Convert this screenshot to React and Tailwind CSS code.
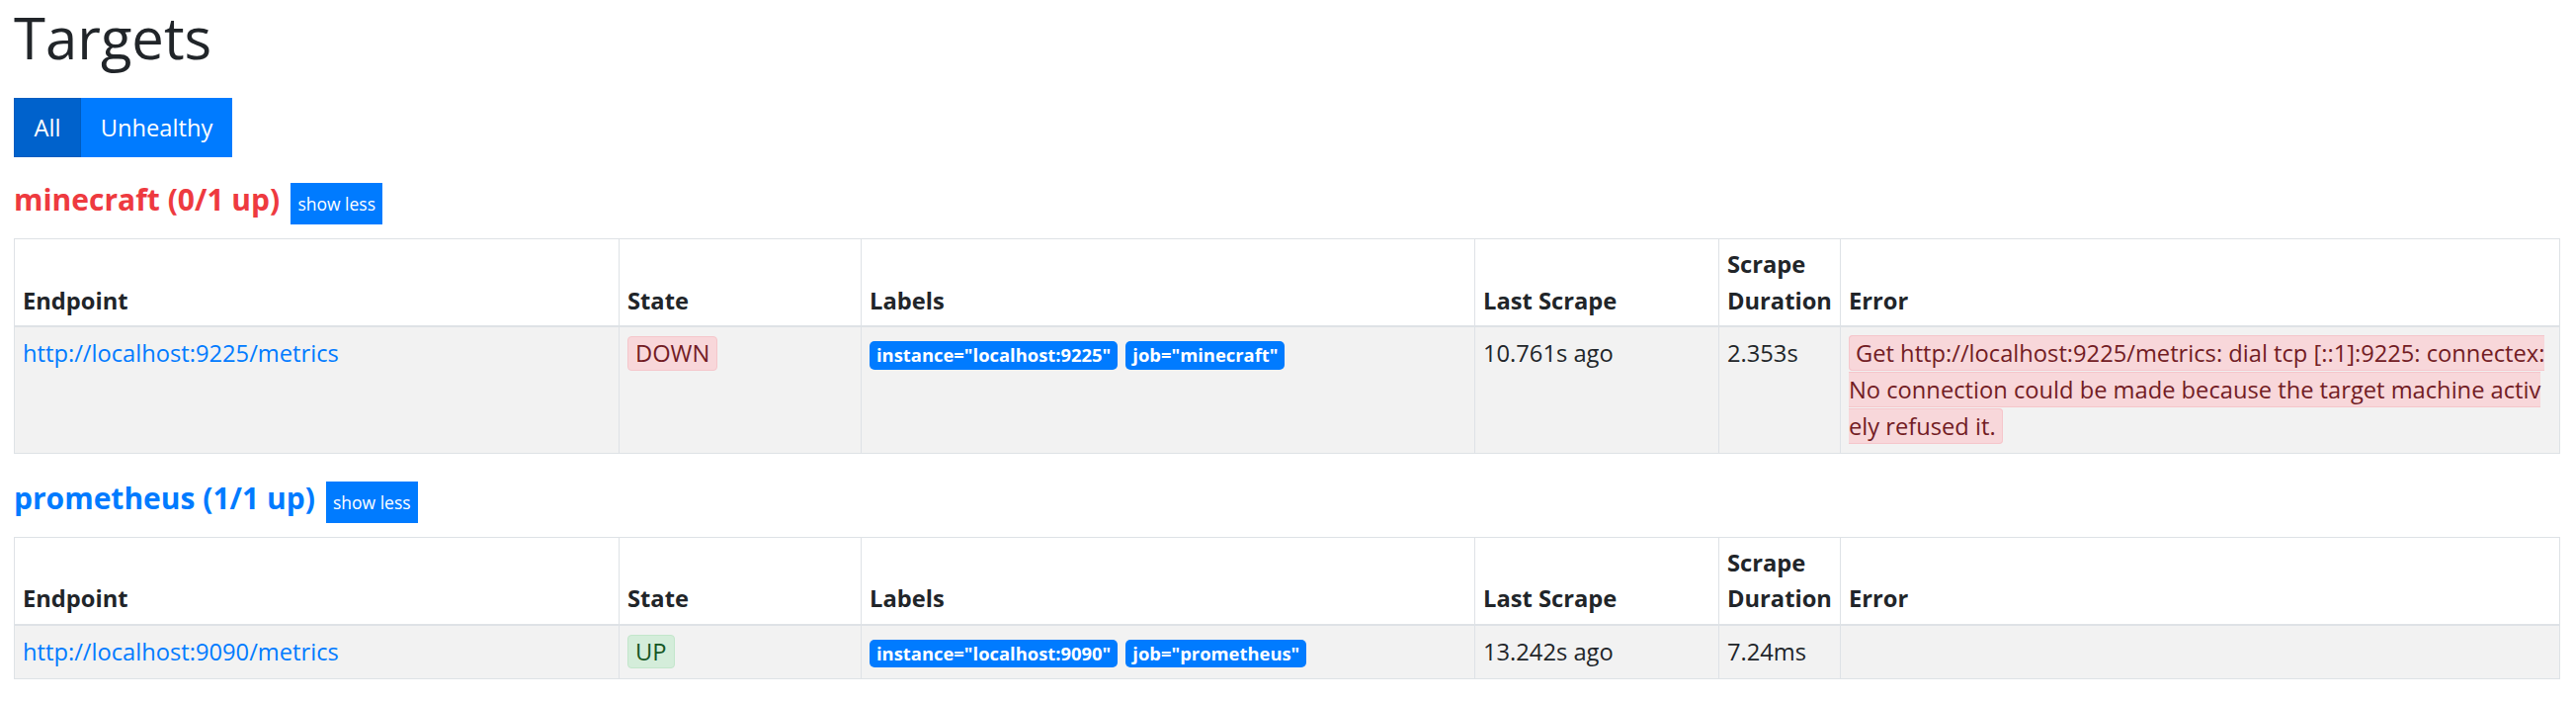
import React from 'react';

const pools = [
  {
    name: 'minecraft',
    up: 0,
    total: 1,
    targets: [
      {
        endpoint: 'http://localhost:9225/metrics',
        state: 'DOWN',
        labels: ['instance="localhost:9225"', 'job="minecraft"'],
        lastScrape: '10.761s ago',
        duration: '2.353s',
        error:
          'Get http://localhost:9225/metrics: dial tcp [::1]:9225: connectex: No connection could be made because the target machine actively refused it.',
      },
    ],
  },
  {
    name: 'prometheus',
    up: 1,
    total: 1,
    targets: [
      {
        endpoint: 'http://localhost:9090/metrics',
        state: 'UP',
        labels: ['instance="localhost:9090"', 'job="prometheus"'],
        lastScrape: '13.242s ago',
        duration: '7.24ms',
        error: '',
      },
    ],
  },
];

const th = 'border border-[#dee2e6] border-b-2 px-[8px] py-[7px] align-bottom text-left font-bold';
const td = 'border border-[#dee2e6] px-[8px] py-[8px] align-top';

function PoolTable({ targets }) {
  return (
    <table className="mt-[14px] w-full table-fixed border-collapse border border-[#dee2e6]">
      <colgroup>
        <col className="w-[612px]" />
        <col className="w-[245px]" />
        <col className="w-[621px]" />
        <col className="w-[247px]" />
        <col className="w-[123px]" />
        <col className="w-[728px]" />
      </colgroup>
      <thead>
        <tr>
          <th className={th}>Endpoint</th>
          <th className={th}>State</th>
          <th className={th}>Labels</th>
          <th className={th}>Last Scrape</th>
          <th className={th}>Scrape Duration</th>
          <th className={th}>Error</th>
        </tr>
      </thead>
      <tbody>
        {targets.map((t) => (
          <tr key={t.endpoint} className="bg-[#f2f2f2]">
            <td className={td}>
              <a href="#" className="text-[#007bff]">{t.endpoint}</a>
            </td>
            <td className={td}>
              {t.state === 'UP' ? (
                <span className="inline-block rounded-[4px] border border-[#c3e6cb] bg-[#d4edda] px-[7px] leading-[32px] text-[#155724]">
                  UP
                </span>
              ) : (
                <span className="inline-block rounded-[4px] border border-[#f5c6cb] bg-[#f8d7da] px-[7px] leading-[33px] text-[#721c24]">
                  DOWN
                </span>
              )}
            </td>
            <td className={td}>
              {t.labels.map((l) => (
                <span
                  key={l}
                  className="mr-[8px] inline-block rounded-[5px] bg-[#007bff] px-[7px] py-[5px] text-[18.4px] font-bold leading-[18.4px] text-white"
                >
                  {l}
                </span>
              ))}
            </td>
            <td className={td}>{t.lastScrape}</td>
            <td className={td}>{t.duration}</td>
            <td className={td + ' break-all'}>
              {t.error && (
                <span className="rounded-[4px] border border-[#f5c6cb] bg-[#f8d7da] px-[6px] py-[1px] text-[#721c24]">
                  {t.error}
                </span>
              )}
            </td>
          </tr>
        ))}
      </tbody>
    </table>
  );
}

export default function App() {
  return (
    <div className="min-h-screen bg-white pl-[14px] pr-[17px] font-['Open_Sans',sans-serif] text-[23.7px] leading-[36.7px] text-[#212529]">
      <h1 className="pt-[2px] text-[58px] font-normal leading-[72px]">Targets</h1>

      <div className="mt-[25px] flex h-[60px]">
        <button className="flex w-[68px] items-center justify-center border border-[#005cbf] bg-[#0062cc] text-white">
          All
        </button>
        <button className="flex w-[153px] items-center justify-center border border-[#007bff] bg-[#007bff] text-white">
          Unhealthy
        </button>
      </div>

      {pools.map((p, i) => {
        const healthy = p.up === p.total;
        return (
          <div key={p.name} className={i === 0 ? 'mt-[26px]' : 'mt-[28px]'}>
            <div className="flex h-[42px] items-start">
              <a
                href="#"
                className={
                  'text-[30px] font-bold leading-[33px] ' +
                  (healthy ? 'text-[#007bff]' : 'text-[#ee3a3f]')
                }
              >
                {p.name} ({p.up}/{p.total} up)
              </a>
              <button className="ml-[11px] flex h-[42px] w-[93px] items-center justify-center border border-[#007bff] bg-[#007bff] text-[17.5px] leading-[24px] text-white">
                show less
              </button>
            </div>
            <PoolTable targets={p.targets} />
          </div>
        );
      })}
    </div>
  );
}
